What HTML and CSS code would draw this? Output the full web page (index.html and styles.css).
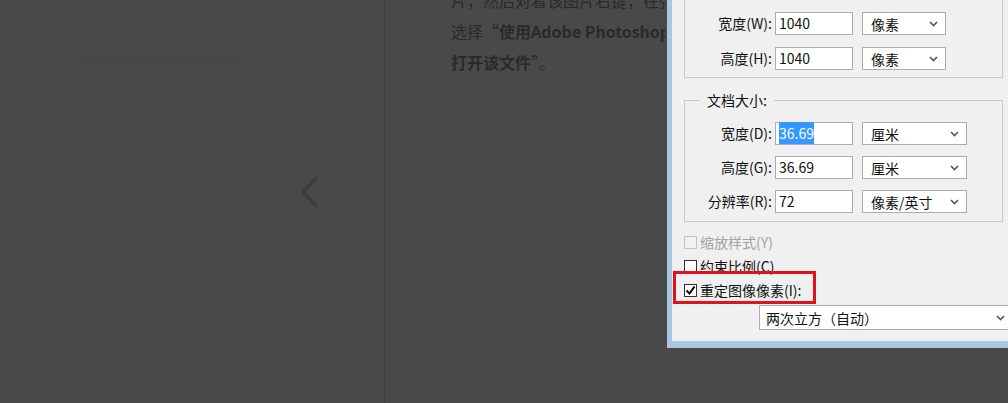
FILE: index.html
```html
<!DOCTYPE html>
<html lang="zh-CN">
<head>
  <meta charset="UTF-8">
  <title>图像大小</title>
  <link rel="stylesheet" href="styles.css">
</head>
<body>
  <div class="page">

    <div class="side">
      <div class="thumb">
        <div class="thumb-strip"></div>
        <div class="thumb-main"></div>
        <div class="thumb-right"></div>
      </div>
      <svg class="prev" width="20" height="34" viewBox="0 0 20 34">
        <polyline points="17,2 3,17 17,32"></polyline>
      </svg>
    </div>

    <div class="article">
      <p class="text">片，然后对着该图片右键，在弹出的菜单中<br>选择<b>“使用Adobe Photoshop CC<br>打开该文件”</b>。</p>

      <div class="dialog">
        <div class="dlg-body">
          <div class="group group-pixel">
            <div class="row">
              <label>宽度(W):</label>
              <div class="input">1040</div>
              <div class="select">像素<svg width="9" height="6" viewBox="0 0 9 6"><polyline points="1,1 4.5,4.5 8,1"></polyline></svg></div>
            </div>
            <div class="row">
              <label>高度(H):</label>
              <div class="input">1040</div>
              <div class="select">像素<svg width="9" height="6" viewBox="0 0 9 6"><polyline points="1,1 4.5,4.5 8,1"></polyline></svg></div>
            </div>
          </div>

          <fieldset class="group group-doc">
            <legend>文档大小:</legend>
            <div class="row">
              <label>宽度(D):</label>
              <div class="input"><span class="selected">36.69</span></div>
              <div class="select">厘米<svg width="9" height="6" viewBox="0 0 9 6"><polyline points="1,1 4.5,4.5 8,1"></polyline></svg></div>
            </div>
            <div class="row">
              <label>高度(G):</label>
              <div class="input">36.69</div>
              <div class="select">厘米<svg width="9" height="6" viewBox="0 0 9 6"><polyline points="1,1 4.5,4.5 8,1"></polyline></svg></div>
            </div>
            <div class="row">
              <label>分辨率(R):</label>
              <div class="input">72</div>
              <div class="select">像素/英寸<svg width="9" height="6" viewBox="0 0 9 6"><polyline points="1,1 4.5,4.5 8,1"></polyline></svg></div>
            </div>
          </fieldset>

          <div class="check disabled"><span class="box"></span>缩放样式(Y)</div>
          <div class="check"><span class="box"></span>约束比例(C)</div>
          <div class="check mark"><span class="box"><svg width="11" height="11" viewBox="0 0 11 11"><polyline points="1.5,5.5 4.5,8.5 9.5,1.5"></polyline></svg></span>重定图像像素(I):</div>

          <div class="select wide">两次立方（自动）<svg width="9" height="6" viewBox="0 0 9 6"><polyline points="1,1 4.5,4.5 8,1"></polyline></svg></div>
        </div>
      </div>
    </div>

  </div>
</body>
</html>
```

FILE: styles.css
```css
*, *::before, *::after {
  box-sizing: border-box;
}

body {
  margin: 0;
  width: 1008px;
  height: 403px;
  overflow: hidden;
  background-color: #494949;
  font-family: "Noto Sans CJK SC", "Noto Sans", sans-serif;
}

.page {
  display: flex;
  height: 403px;
}

/* left column, dimmed */
.side {
  width: 385px;
  flex: none;
  display: flex;
  align-items: flex-start;
  padding: 57px 0 0 68px;
  border-right: 1px solid #414141;
}

.thumb {
  width: 222px;
  height: 225px;
  display: flex;
  border: 1px solid #464646;
}

.thumb-strip {
  width: 15px;
  border-right: 1px solid #464646;
}

.thumb-main {
  flex: 1;
  border-top: 4px solid #474747;
}

.thumb-right {
  width: 53px;
  border-left: 1px solid #464646;
}

.prev {
  margin: 118px 0 0 10px;
}

.prev polyline {
  fill: none;
  stroke: #3c3c3c;
  stroke-width: 3;
}

/* article */
.article {
  flex: 1;
  display: flex;
  align-items: flex-start;
}

.text {
  width: 280px;
  flex: none;
  margin: -15px 0 0;
  padding-left: 66px;
  overflow: hidden;
  white-space: nowrap;
  font-size: 16px;
  line-height: 31px;
  color: #2a2a2a;
}

/* photoshop dialog */
.dialog {
  flex: 1;
  margin-left: 2px;
  border-left: 5px solid #abc6e3;
  border-bottom: 7px solid #abc6e3;
}

.dlg-body {
  background-color: #f0f0f0;
  padding: 0 0 11px 12px;
  font-size: 14px;
  color: #111;
}

.group {
  width: 319px;
  border: 1px solid #cacaca;
}

.group-pixel {
  border-top: none;
  padding: 12px 0 7px 0;
}

.group-doc {
  margin: 12px 0 0;
  padding: 12px 0 8px 0;
  min-width: 0;
}

.group-doc legend {
  margin-left: 15px;
  padding: 0 7px;
  line-height: 20px;
}

.row {
  display: flex;
  align-items: center;
  height: 23px;
}

.group-pixel .row + .row {
  margin-top: 12px;
}

.group-doc .row + .row {
  margin-top: 11px;
}

.row label {
  width: 87px;
  text-align: right;
  line-height: 23px;
}

.input {
  width: 78px;
  height: 23px;
  margin-left: 3px;
  padding-left: 3px;
  border: 1px solid #abadb3;
  background-color: #fff;
  line-height: 21px;
}

.selected {
  background-color: #3399ff;
  color: #fff;
  padding: 1px 0;
}

.select {
  width: 84px;
  height: 23px;
  margin-left: 9px;
  padding: 0 7px 0 8px;
  display: flex;
  align-items: center;
  justify-content: space-between;
  border: 1px solid #acacac;
  background-color: #fff;
}

.group-doc .select {
  width: 105px;
}

.select polyline {
  fill: none;
  stroke: #555;
  stroke-width: 1.6;
}

.check {
  position: relative;
  display: flex;
  align-items: center;
  height: 24px;
  line-height: 24px;
}

.group-doc + .check {
  margin-top: 8px;
}

.box {
  width: 13px;
  height: 13px;
  margin-right: 3px;
  border: 1px solid #333;
  background-color: #fff;
  display: flex;
  align-items: center;
  justify-content: center;
}

.box polyline {
  fill: none;
  stroke: #000;
  stroke-width: 2;
}

.check.disabled {
  color: #a2a2a2;
}

.check.disabled .box {
  border-color: #c2c2c2;
  background-color: #f2f2f2;
}

/* red highlight round the checked option */
.check.mark::after {
  content: "";
  position: absolute;
  left: -11px;
  top: -7px;
  width: 143px;
  height: 33px;
  border: 3px solid #e3111b;
}

.select.wide {
  width: 254px;
  height: 25px;
  margin: 3px 0 0 75px;
  padding-left: 6px;
}
```
